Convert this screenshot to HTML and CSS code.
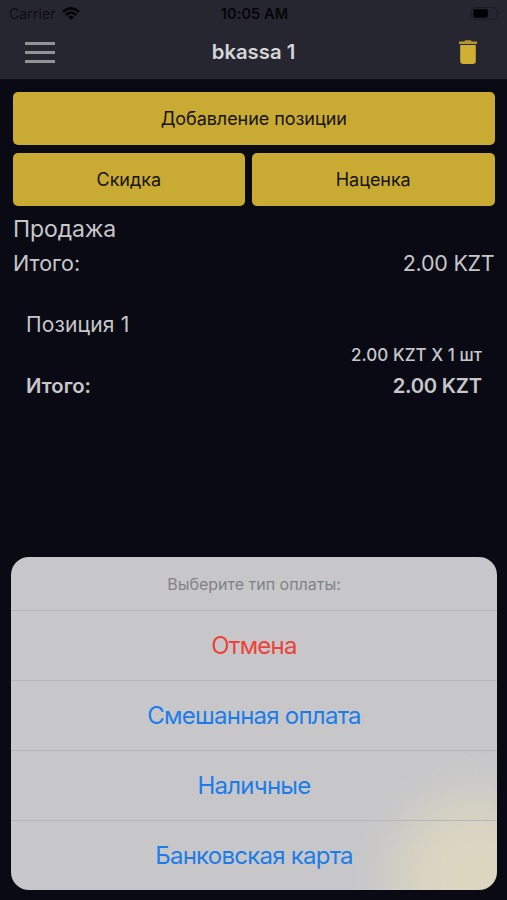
FILE: index.html
```html
<!DOCTYPE html>
<html lang="ru">
<head>
<meta charset="utf-8">
<title>bkassa 1</title>
<link rel="stylesheet" href="styles.css">
</head>
<body>
<div class="screen">
  <header class="header">
    <div class="status">
      <div class="carrier">
        <span>Carrier</span>
        <svg class="wifi" viewBox="0 0 18 13" width="18" height="13">
          <g fill="none" stroke="#050508" stroke-width="2.6">
            <path d="M1 4.9Q9-2 17 4.9"/>
            <path d="M3.8 8Q9 3.4 14.2 8"/>
          </g>
          <path d="M6 10Q9 7.4 12 10L9 13Z" fill="#050508"/>
        </svg>
      </div>
      <div class="clock">10:05 AM</div>
      <svg class="battery" viewBox="0 0 29 13" width="29" height="13">
        <rect x=".5" y=".5" width="25" height="12" rx="3.2" fill="none" stroke="#1b1b22"/>
        <rect x="2.3" y="2.3" width="14.5" height="8.4" rx="1.4" fill="#020204"/>
        <path d="M27 4.5Q29 6.5 27 8.5Z" fill="#1b1b22"/>
      </svg>
    </div>
    <nav class="nav">
      <div class="menu"><i></i><i></i><i></i></div>
      <h1>bkassa 1</h1>
      <svg class="trash" viewBox="0 0 18 24" width="18" height="24">
        <path d="M0 1.5H5.2L6.2.3H11.8L12.8 1.5H18V4.1H0Z" fill="#b3972f"/>
        <path d="M1.2 4.9H16.8V21Q16.8 24 13.8 24H4.2Q1.2 24 1.2 21Z" fill="#cfae32"/>
      </svg>
    </nav>
  </header>
  <main class="content">
    <div class="buttons">
      <button class="btn wide">Добавление позиции</button>
      <button class="btn">Скидка</button>
      <button class="btn">Наценка</button>
    </div>
    <h2 class="sale">Продажа</h2>
    <div class="row total"><span>Итого:</span><span class="total-sum">2.00 KZT</span></div>
    <section class="item">
      <div class="item-name">Позиция 1</div>
      <div class="item-qty">2.00 KZT X 1 шт</div>
      <div class="row item-total"><span>Итого:</span><span class="item-sum">2.00 KZT</span></div>
    </section>
  </main>
  <div class="sheet">
    <div class="sheet-title">Выберите тип оплаты:</div>
    <div class="option danger">Отмена</div>
    <div class="option">Смешанная оплата</div>
    <div class="option">Наличные</div>
    <div class="option">Банковская карта</div>
  </div>
</div>
</body>
</html>
```
FILE: styles.css
```css
* { box-sizing: border-box; }
body { margin: 0; background: #090a13; font-family: Inter, "Liberation Sans", sans-serif; }
h1, h2 { margin: 0; font-weight: 400; }
.screen { width: 507px; height: 900px; display: flex; flex-direction: column; background: #090a13; overflow: hidden; color: #c7c7ca; }
.header { height: 79px; background: #262630; flex: none; }
.status { height: 27px; padding: 0 7px 0 9px; display: grid; grid-template-columns: 1fr auto 1fr; align-items: center; color: #050508; }
.carrier { display: flex; align-items: center; gap: 6px; font-size: 14px; letter-spacing: .1px; color: #0c0c11; }
.clock { font-size: 14.5px; font-weight: 600; letter-spacing: .1px; }
.battery { justify-self: end; }
.nav { height: 50px; padding: 0 30px 0 25px; display: grid; grid-template-columns: 1fr auto 1fr; align-items: center; }
.menu { width: 30px; display: flex; flex-direction: column; gap: 6px; }
.menu i { height: 3px; background: #929297; }
.nav h1 { font-size: 20.3px; line-height: 24px; font-weight: 600; color: #d4d4d7; margin: 0 -2.5px 0 2.5px; }
.trash { justify-self: end; }
.content { padding: 12.5px 12.5px 0 13px; flex: 1; }
.buttons { display: grid; grid-template-columns: 231.5px 242.5px; gap: 7.5px; }
.btn { height: 53.5px; border: 0; border-radius: 5px; background: #c9aa33; color: #15130b; font: 400 18px/22px Inter, sans-serif; padding: 1px 0 0; letter-spacing: -.05px; }
.wide { grid-column: 1 / 3; }
.sale { font-size: 23px; line-height: 28px; margin-top: 9px; letter-spacing: -.1px; }
.row { display: flex; justify-content: space-between; }
.total { font-size: 21.5px; line-height: 26px; margin-top: 7px; }
.total-sum { letter-spacing: -.25px; }
.item { padding: 0 12.5px 0 13px; margin-top: 36px; }
.item-name { font-size: 21px; line-height: 26px; letter-spacing: .15px; }
.item-qty { font-size: 17px; line-height: 20px; font-weight: 500; text-align: right; margin-top: 7px; letter-spacing: .05px; }
.item-total { font-size: 20.3px; line-height: 24px; font-weight: 600; margin-top: 9px; }
.item-sum { letter-spacing: -.25px; }
.sheet { margin: 0 10px 10px 11px; height: 333.5px; flex: none; border-radius: 18px; background: radial-gradient(ellipse 125px 125px at 465px 320px, #ddd6c0 0%, #dad5c2 38%, #d2cfc4 60%, #cac9c8 80%, rgba(199,199,202,0) 100%), #c7c7ca; overflow: hidden; text-align: center; }
.sheet-title { height: 53.5px; line-height: 54px; font-size: 16px; color: #828286; }
.option { height: 70px; border-top: 1px solid #b6b6ba; line-height: 70px; font-size: 24px; letter-spacing: -.75px; color: #1c7de9; }
.danger { color: #ec4239; }
```
